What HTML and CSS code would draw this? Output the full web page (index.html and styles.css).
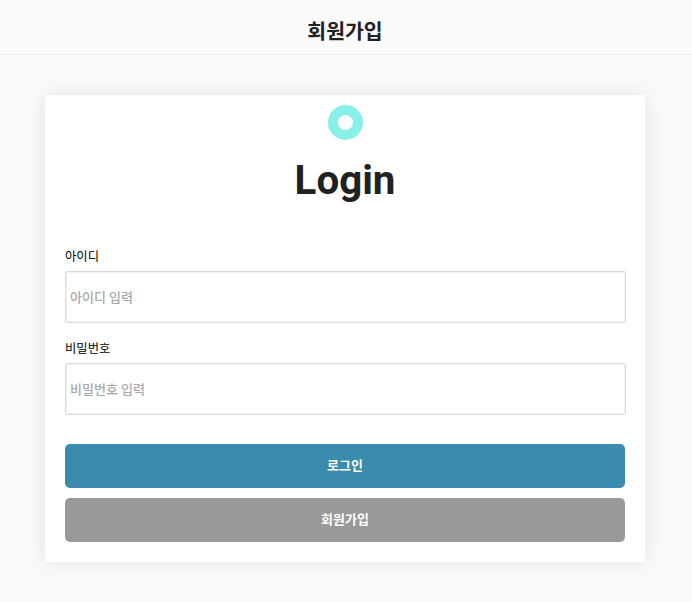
FILE: index.html
```html
<!DOCTYPE html>
<html lang="ko">
<head>
    <meta charset="UTF-8">
    <meta name="viewport" content="width=device-width, initial-scale=1.0">
    <link rel="stylesheet" href="styles.css">
    <title>회원가입</title>
</head>
<body>
    <header class="top-bar">
        <h2 class="top-title">회원가입</h2>
    </header>
    <main class="page">
        <div class="card">
            <div class="logo"></div>
            <h1 class="card-title">Login</h1>
            <form class="login-form">
                <label class="field-label" for="userId">아이디</label>
                <input class="field-input" type="text" id="userId" placeholder="아이디 입력">
                <label class="field-label" for="userPw">비밀번호</label>
                <input class="field-input" type="password" id="userPw" placeholder="비밀번호 입력">
                <button class="btn btn-login" type="button">로그인</button>
                <button class="btn btn-join" type="button">회원가입</button>
            </form>
        </div>
    </main>
</body>
</html>
```

FILE: styles.css
```css
* {
    box-sizing: border-box;
}

body {
    font-family: 'Roboto', 'Noto Sans CJK KR', sans-serif;
    margin: 0;
    background-color: #fafafa;
    color: #212121;
}

.top-bar {
    height: 55px;
    display: flex;
    justify-content: center;
    align-items: center;
    padding: 5px 2px 0 0;
    border-bottom: 1px solid #eeeeee;
}

.top-title {
    font-size: 20.5px;
    font-weight: 700;
    margin: 0;
}

.page {
    display: flex;
    justify-content: center;
    padding: 40px 2px 40px 0;
}

.card {
    width: 600px;
    height: 467px;
    padding: 10px 20px 20px;
    background-color: #fff;
    box-shadow: 0 0 20px rgba(0, 0, 0, 0.1);
}

.logo {
    width: 35px;
    height: 35px;
    margin: 0 auto;
    border: 10px solid #88f0e9;
    border-radius: 50%;
}

.card-title {
    font-size: 40.3px;
    line-height: 47px;
    font-weight: 700;
    text-align: center;
    margin: 17px 0 44px;
}

.login-form {
    display: flex;
    flex-direction: column;
}

.field-label {
    font-size: 12.3px;
    line-height: 19px;
    color: #000;
    margin-bottom: 4px;
}

.field-input {
    width: 561px;
    height: 52px;
    padding: 0 4px;
    margin-bottom: 17px;
    font-family: inherit;
    font-size: 13px;
    font-weight: 500;
    background-color: #fff;
    border: 1px solid #dcdcdc;
    border-radius: 2px;
    box-shadow: inset 0 0 0 1px #f2f2f2;
}

.field-input::placeholder {
    color: #a8a8a8;
}

.btn {
    width: 560px;
    height: 44px;
    padding: 0 0 3px;
    font-family: inherit;
    font-size: 13px;
    font-weight: 700;
    color: #fff;
    border: none;
    border-radius: 5px;
}

.btn-login {
    background-color: #3a8bad;
    margin-top: 12px;
    margin-bottom: 10px;
}

.btn-join {
    background-color: #999999;
}
```
